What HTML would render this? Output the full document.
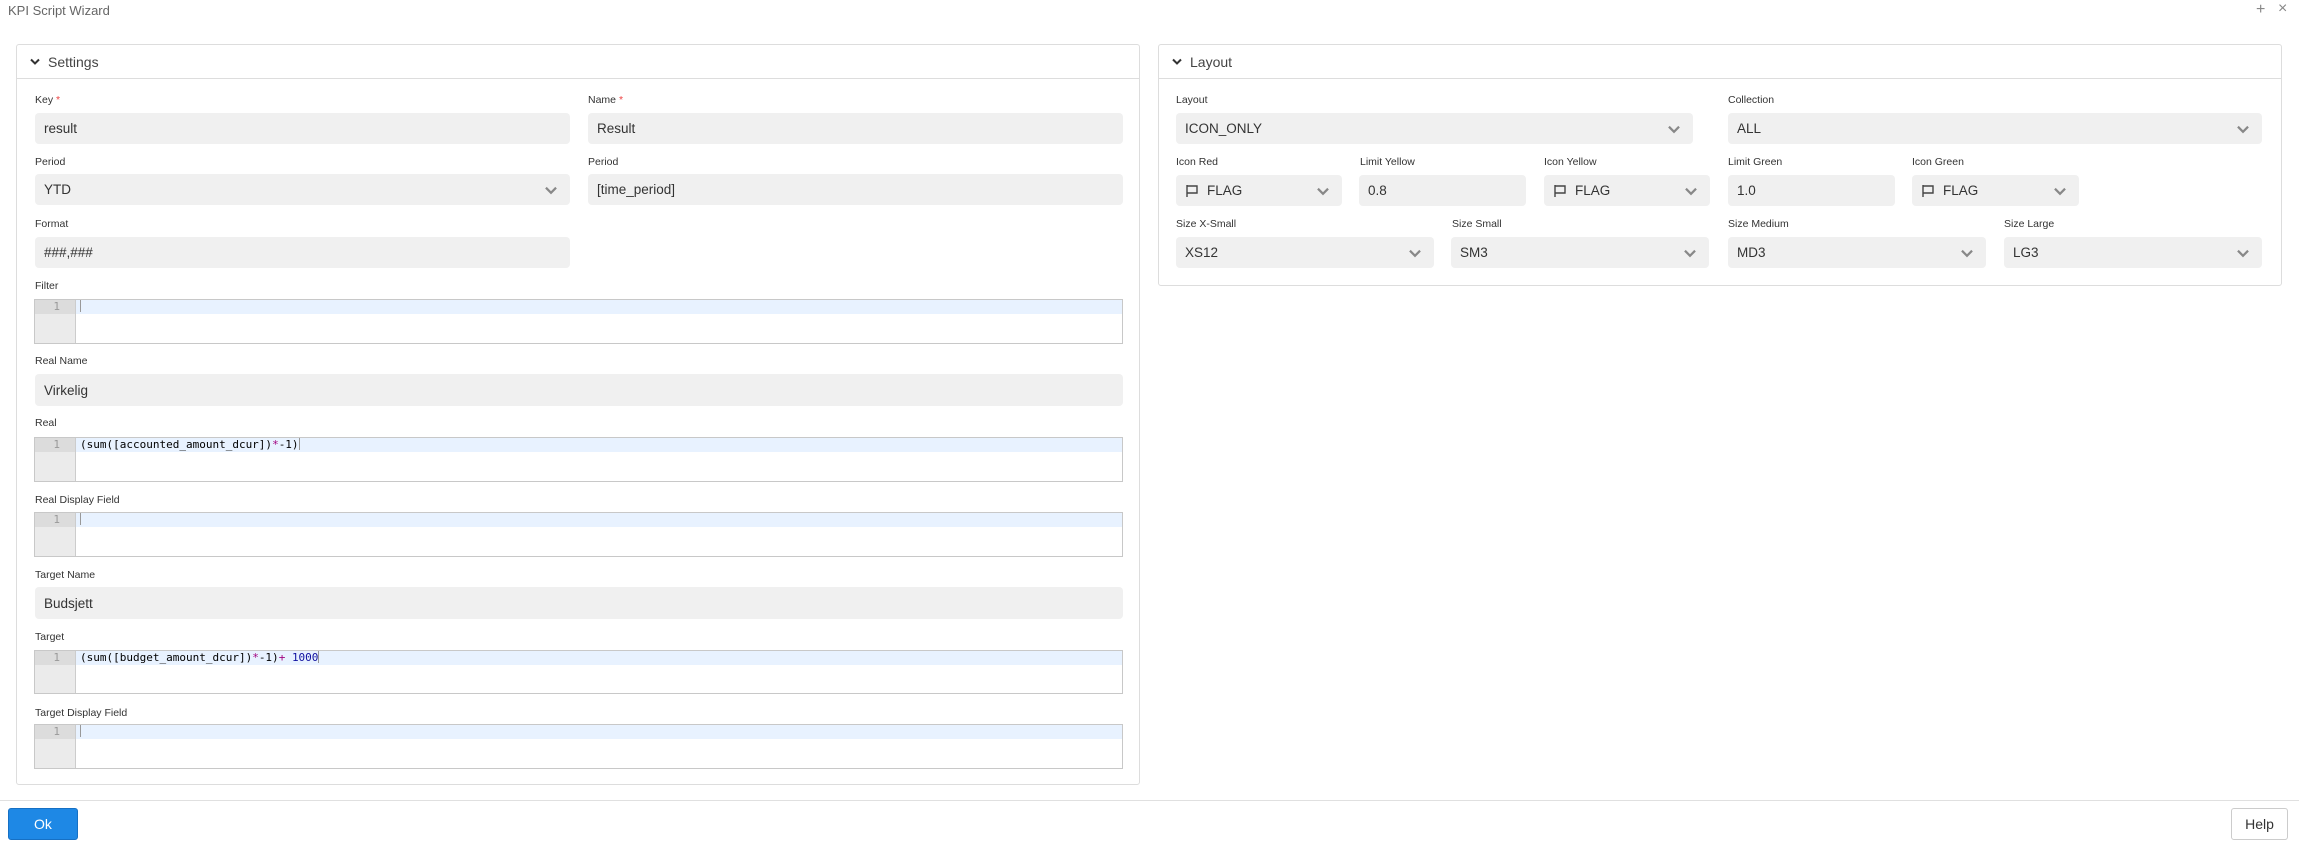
<!DOCTYPE html>
<html><head><meta charset="utf-8"><style>
*{box-sizing:border-box;margin:0;padding:0}
body{width:2299px;height:843px;background:#fff;font-family:"Liberation Sans",sans-serif;color:#333;position:relative;overflow:hidden}
.a{position:absolute}
.title{left:8px;top:3px;font-size:13px;color:#666}
.panel{border:1px solid #ddd;border-radius:3px;background:#fff}
.ph{position:absolute;left:0;right:0;top:0;height:34px;border-bottom:1px solid #ddd;font-size:14px;color:#444;padding:9px 0 0 31px}
.ph svg{position:absolute;left:13px;top:13px}
.lbl{font-size:10.5px;color:#333}
.req{color:#e44}
.in{background:#f0f0f0;border-radius:4px;font-size:13.5px;color:#333;padding:0 0 0 9px;display:flex;align-items:center}
.in .ch{position:absolute;right:12px;top:50%;margin-top:-4px}
.ed{border:1px solid #c8c8c8;background:#fff;overflow:hidden}
.ed .g{position:absolute;left:0;top:0;bottom:0;width:41px;background:#ebebeb;border-right:1px solid #ccc}
.ed .gl{position:absolute;left:0;top:0;width:40px;height:14px;background:#dcdcdc;font:11px "DejaVu Sans Mono",monospace;color:#999;text-align:right;padding-right:15px;line-height:14px}
.ed .al{position:absolute;left:41px;right:0;top:0;height:14px;background:#e8f2ff}
.ed .code{position:absolute;left:45px;top:0;font:11px "DejaVu Sans Mono",monospace;line-height:14px;color:#000;white-space:pre}
.cur{display:inline-block;width:1px;height:12px;background:#999;vertical-align:-2px}
.op{color:#a1007f}.num{color:#1010a0}
.flag{display:inline-block;margin-right:8px}
</style></head><body>
<div class="a title">KPI Script Wizard</div>
<div class="a" style="left:2256px;top:1px;font-size:16px;color:#888">+</div>
<div class="a" style="left:2278px;top:0px;font-size:16px;color:#888">×</div>

<svg width="0" height="0" style="position:absolute"><defs>
<symbol id="chev" viewBox="0 0 12 8"><path d="M1.5 1.5 L6 6 L10.5 1.5" fill="none" stroke="#888" stroke-width="2"/></symbol>
<symbol id="flag" viewBox="0 0 14 14"><path d="M2 1 V13 M2 2 H12 V9 H2" fill="none" stroke="#444" stroke-width="1.4"/></symbol>
</defs></svg>

<div class="a panel" style="left:16px;top:44px;width:1124px;height:741px">
<div class="ph"><svg width="10" height="8"><path d="M1 1.5 L5 5.5 L9 1.5" fill="none" stroke="#333" stroke-width="2"/></svg>Settings</div>
</div>
<div class="a lbl" style="left:35px;top:94px">Key <span class="req">*</span></div>
<div class="a in" style="left:35px;top:113px;width:535px;height:31px">result</div>
<div class="a lbl" style="left:588px;top:94px">Name <span class="req">*</span></div>
<div class="a in" style="left:588px;top:113px;width:535px;height:31px">Result</div>

<div class="a lbl" style="left:35px;top:156px">Period</div>
<div class="a in" style="left:35px;top:174px;width:535px;height:31px">YTD<svg class="ch" width="14" height="9"><use href="#chev"/></svg></div>
<div class="a lbl" style="left:588px;top:156px">Period</div>
<div class="a in" style="left:588px;top:174px;width:535px;height:31px">[time_period]</div>

<div class="a lbl" style="left:35px;top:218px">Format</div>
<div class="a in" style="left:35px;top:237px;width:535px;height:31px">###,###</div>

<div class="a lbl" style="left:35px;top:280px">Filter</div>
<div class="a ed" style="left:34px;top:299px;width:1089px;height:45px"><div class="g"></div><div class="al"></div><div class="gl">1</div><div class="code"><span class="cur"></span></div></div>

<div class="a lbl" style="left:35px;top:355px">Real Name</div>
<div class="a in" style="left:35px;top:374px;width:1088px;height:32px">Virkelig</div>

<div class="a lbl" style="left:35px;top:417px">Real</div>
<div class="a ed" style="left:34px;top:437px;width:1089px;height:45px"><div class="g"></div><div class="al"></div><div class="gl">1</div><div class="code">(sum([accounted_amount_dcur])<span class="op">*</span>-1)<span class="cur"></span></div></div>

<div class="a lbl" style="left:35px;top:494px">Real Display Field</div>
<div class="a ed" style="left:34px;top:512px;width:1089px;height:45px"><div class="g"></div><div class="al"></div><div class="gl">1</div><div class="code"><span class="cur"></span></div></div>

<div class="a lbl" style="left:35px;top:569px">Target Name</div>
<div class="a in" style="left:35px;top:587px;width:1088px;height:32px">Budsjett</div>

<div class="a lbl" style="left:35px;top:631px">Target</div>
<div class="a ed" style="left:34px;top:650px;width:1089px;height:44px"><div class="g"></div><div class="al"></div><div class="gl">1</div><div class="code">(sum([budget_amount_dcur])<span class="op">*</span>-1)<span class="op">+</span> <span class="num">1000</span><span class="cur"></span></div></div>

<div class="a lbl" style="left:35px;top:707px">Target Display Field</div>
<div class="a ed" style="left:34px;top:724px;width:1089px;height:45px"><div class="g"></div><div class="al"></div><div class="gl">1</div><div class="code"><span class="cur"></span></div></div>

<div class="a panel" style="left:1158px;top:44px;width:1124px;height:242px">
<div class="ph"><svg width="10" height="8"><path d="M1 1.5 L5 5.5 L9 1.5" fill="none" stroke="#333" stroke-width="2"/></svg>Layout</div>
</div>
<div class="a lbl" style="left:1176px;top:94px">Layout</div>
<div class="a in" style="left:1176px;top:113px;width:517px;height:31px">ICON_ONLY<svg class="ch" width="14" height="9"><use href="#chev"/></svg></div>
<div class="a lbl" style="left:1728px;top:94px">Collection</div>
<div class="a in" style="left:1728px;top:113px;width:534px;height:31px">ALL<svg class="ch" width="14" height="9"><use href="#chev"/></svg></div>

<div class="a lbl" style="left:1176px;top:156px">Icon Red</div>
<div class="a in" style="left:1176px;top:175px;width:166px;height:31px"><svg class="flag" width="14" height="14"><use href="#flag"/></svg>FLAG<svg class="ch" width="14" height="9"><use href="#chev"/></svg></div>
<div class="a lbl" style="left:1360px;top:156px">Limit Yellow</div>
<div class="a in" style="left:1359px;top:175px;width:167px;height:31px">0.8</div>
<div class="a lbl" style="left:1544px;top:156px">Icon Yellow</div>
<div class="a in" style="left:1544px;top:175px;width:166px;height:31px"><svg class="flag" width="14" height="14"><use href="#flag"/></svg>FLAG<svg class="ch" width="14" height="9"><use href="#chev"/></svg></div>
<div class="a lbl" style="left:1728px;top:156px">Limit Green</div>
<div class="a in" style="left:1728px;top:175px;width:167px;height:31px">1.0</div>
<div class="a lbl" style="left:1912px;top:156px">Icon Green</div>
<div class="a in" style="left:1912px;top:175px;width:167px;height:31px"><svg class="flag" width="14" height="14"><use href="#flag"/></svg>FLAG<svg class="ch" width="14" height="9"><use href="#chev"/></svg></div>

<div class="a lbl" style="left:1176px;top:218px">Size X-Small</div>
<div class="a in" style="left:1176px;top:237px;width:258px;height:31px">XS12<svg class="ch" width="14" height="9"><use href="#chev"/></svg></div>
<div class="a lbl" style="left:1452px;top:218px">Size Small</div>
<div class="a in" style="left:1451px;top:237px;width:258px;height:31px">SM3<svg class="ch" width="14" height="9"><use href="#chev"/></svg></div>
<div class="a lbl" style="left:1728px;top:218px">Size Medium</div>
<div class="a in" style="left:1728px;top:237px;width:258px;height:31px">MD3<svg class="ch" width="14" height="9"><use href="#chev"/></svg></div>
<div class="a lbl" style="left:2004px;top:218px">Size Large</div>
<div class="a in" style="left:2004px;top:237px;width:258px;height:31px">LG3<svg class="ch" width="14" height="9"><use href="#chev"/></svg></div>

<div class="a" style="left:0;right:0;top:800px;height:1px;background:#e0e0e0"></div>
<div class="a" style="left:8px;top:808px;width:70px;height:32px;background:#1e88e5;border:1px solid #1670c4;border-radius:3px;color:#fff;font-size:14px;text-align:center;line-height:30px">Ok</div>
<div class="a" style="left:2231px;top:808px;width:57px;height:32px;background:#fff;border:1px solid #ccc;border-radius:3px;color:#333;font-size:14px;text-align:center;line-height:30px">Help</div>
</body></html>
